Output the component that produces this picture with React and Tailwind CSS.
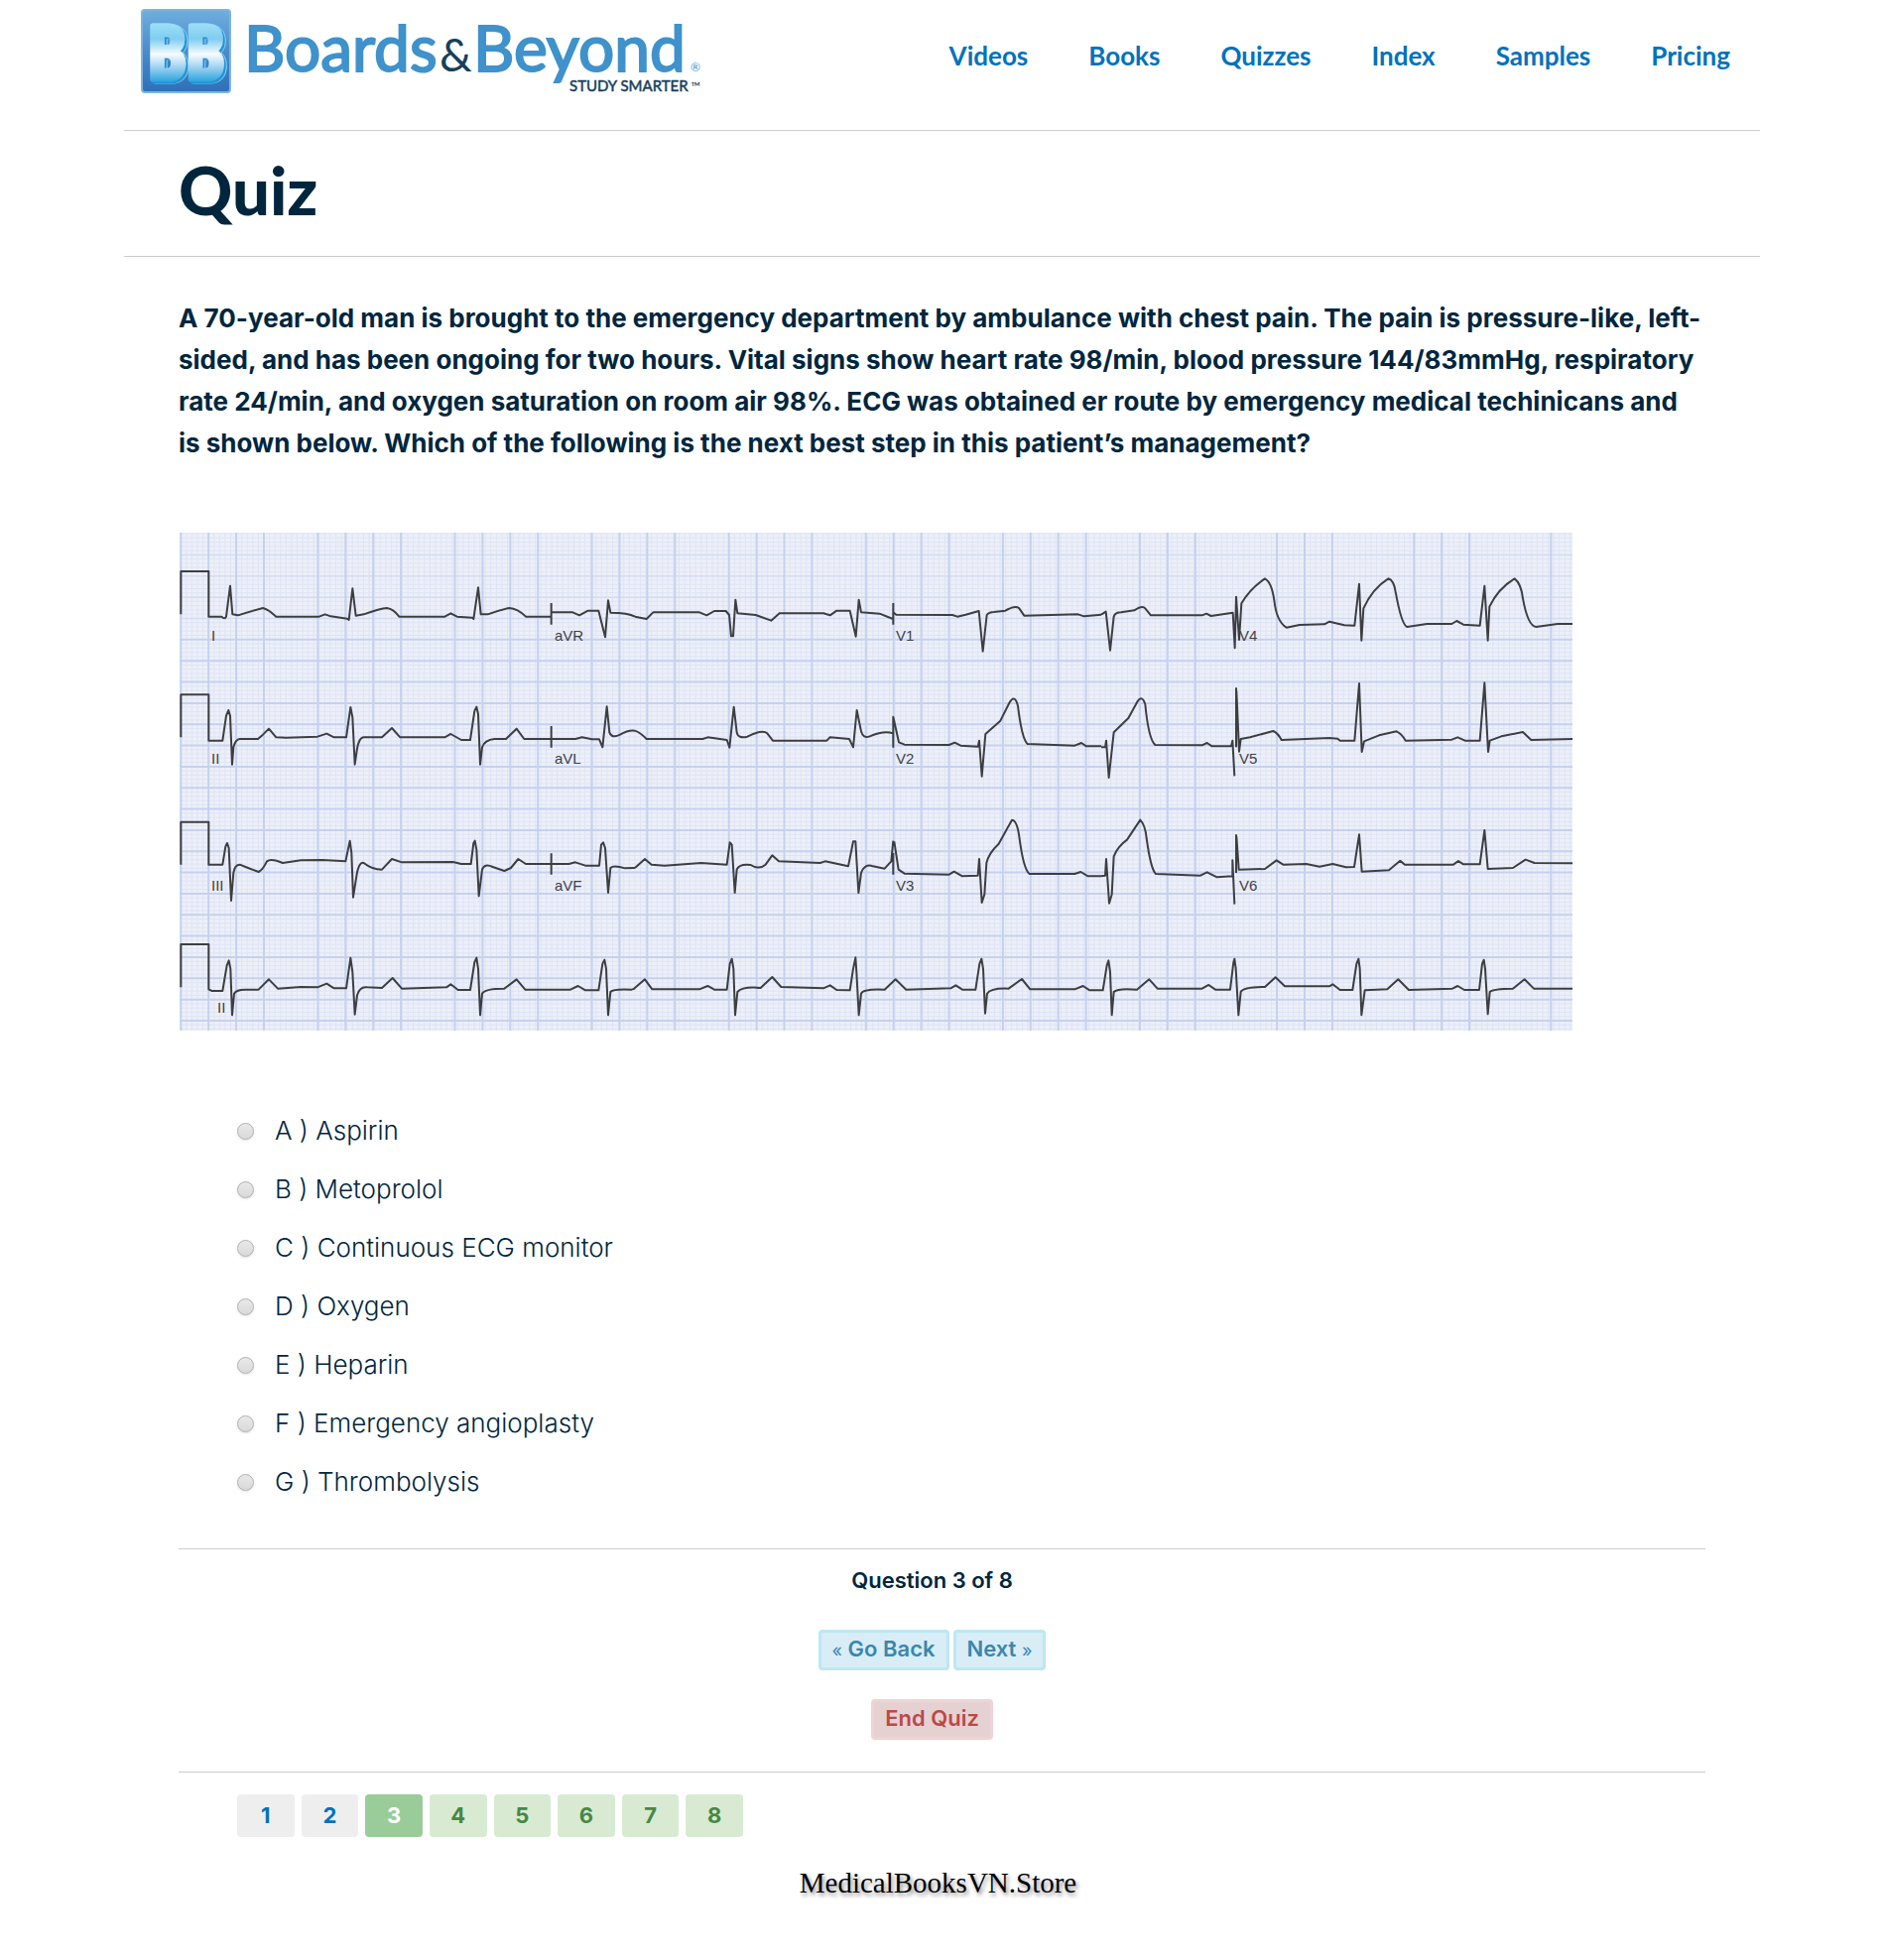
import React, { useState } from "react";

const NAV = ["Videos", "Books", "Quizzes", "Index", "Samples", "Pricing"];

const OPTIONS = [
  ["A", "Aspirin"],
  ["B", "Metoprolol"],
  ["C", "Continuous ECG monitor"],
  ["D", "Oxygen"],
  ["E", "Heparin"],
  ["F", "Emergency angioplasty"],
  ["G", "Thrombolysis"],
];

function Logo() {
  return (
    <svg viewBox="0 0 580 110" className="h-[110px] w-[580px] overflow-visible" role="img" aria-label="Boards & Beyond">
      <defs>
        <linearGradient id="tile" x1="0" y1="0" x2="0" y2="1">
          <stop offset="0" stopColor="#6faede" />
          <stop offset="0.5" stopColor="#4a8bcb" />
          <stop offset="1" stopColor="#2f6fb8" />
        </linearGradient>
        <linearGradient id="face" gradientUnits="userSpaceOnUse" x1="0" y1="12" x2="0" y2="76">
          <stop offset="0" stopColor="#a5e2f6" />
          <stop offset="0.3" stopColor="#7fcdf0" />
          <stop offset="0.54" stopColor="#f7fcff" />
          <stop offset="0.7" stopColor="#b5dcf4" />
          <stop offset="1" stopColor="#1f9fdd" />
        </linearGradient>
        <filter id="depth" x="-10%" y="-10%" width="120%" height="120%">
          <feDropShadow dx="1" dy="1" stdDeviation="0" floodColor="#2496d8" />
          <feDropShadow dx="1" dy="1" stdDeviation="0" floodColor="#2496d8" />
          <feDropShadow dx="1" dy="0" stdDeviation="0.5" floodColor="#7fd0f2" />
        </filter>
      </defs>
      <rect x="1" y="2" width="89" height="83" rx="3" fill="url(#tile)" stroke="#7fb3dd" strokeWidth="2" />
      <text
        x="7" y="72" fontFamily="'Open Sans Condensed', 'Roboto Condensed', sans-serif" fontWeight="700" fontSize="76"
        fill="url(#face)" stroke="url(#face)" strokeWidth="5" strokeLinejoin="round" filter="url(#depth)"
      >BB</text>
      <g fontFamily="Lato, sans-serif" fontSize="64">
        <text x="104" y="64" fill="#3f92cb" stroke="#3f92cb" strokeWidth="2">Boards</text>
        <text x="301" y="64" fontSize="46" fill="#163f5c">&amp;</text>
        <text x="335" y="64" fill="#3f92cb" stroke="#3f92cb" strokeWidth="2">Beyond</text>
      </g>
      <text x="554" y="64" fontSize="12" fontFamily="Lato, sans-serif" fill="#3f92cb">®</text>
      <text x="432" y="84" fontSize="15" fontFamily="Lato, sans-serif" fill="#163f5c" stroke="#163f5c" strokeWidth="0.5">STUDY SMARTER</text>
      <text x="554" y="84" fontSize="13" fontFamily="Lato, sans-serif" fill="#163f5c">™</text>
    </svg>
  );
}

const range = (n) => Array.from({ length: n }, (_, i) => i);

const MAJOR_X = range(11).flatMap((k) =>
  range(k >= 7 ? 3 : 4).map((j) => 182.3 + 138.1 * k + 27.9 * j)
).filter((x) => x < 1585);
const MAJOR_Y = range(23).map((k) => 559.5 + 21.34 * k);
const MINOR_X = range(252).map((k) => 182.3 + 5.58 * k);
const MINOR_Y = range(118).map((k) => 538 + 4.27 * k);

const vLines = (xs) => xs.map((x) => `M${x} 537V1039`).join("");
const hLines = (ys) => ys.map((y) => `M181 ${y}H1585`).join("");

const STRIPS = [
  {
    at: "translate(170 530) scale(0.33333)",
    d: [
      "M37 268V138H121V275H160Q170 285 174 275L186 182L193 268L210 271Q250 258 285 249Q300 252 325 275H455L473 268L490 274L540 281L545 285L556 190L566 272L590 268Q640 250 660 249Q680 252 697 275H835L853 265L872 275L918 278L922 282L936 187L944 268H965Q1000 255 1030 249Q1055 250 1080 275H1155M1157 234V299M1157 262H1222L1242 271L1268 257H1300L1320 337L1329 226L1336 263Q1390 263 1410 275",
      "M37 640V511H121V650H163L174 575L181 558L186 575L192 722L196 670Q202 646 215 645H270L285 632L303 614L325 640L355 641L450 638L478 629L500 640H537L550 549L556 580L563 722L569 680Q575 640 590 640H645L675 612L700 640H835L853 630L885 648H912L925 560L931 548L936 570L942 722L948 670Q955 648 985 645H1020L1052 614L1075 645H1155M1157 606V671M1157 645H1230L1250 640L1280 646H1302L1312 670L1325 547L1333 625Q1340 645 1365 632Q1390 617 1410 620",
    ],
  },
  {
    at: "translate(640 530) scale(0.33333)",
    d: [
      "M0 275L35 282L55 262H195L217 271L240 258H275L285 270L291 334H297L304 224L310 265L365 270L412 287L437 265H570L590 271L610 257H650L668 335L677 224L684 262L740 266L780 282M781 234V299M781 262L790 269L960 270L975 275L1000 269L1040 258L1052 380L1064 270Q1070 262 1085 261L1120 257Q1150 240 1162 250L1177 272L1340 268L1358 274L1410 269",
      "M0 620Q15 625 35 645H205L220 640L278 648L286 671L299 548L308 625Q312 645 340 638Q385 615 400 628L417 650H580L590 640L648 645L660 670L671 558L684 622Q690 645 710 637Q755 618 780 628M781 671V578L798 655L815 662L950 663L967 656L985 665L1037 668L1041 650L1049 758L1060 630L1105 590L1130 540Q1148 505 1158 545Q1170 645 1187 660L1330 665L1350 657L1365 667H1410",
    ],
  },
  {
    at: "translate(1110 530) scale(0.33333)",
    d: [
      "M0 269L14 260L27 377L38 275Q42 262 60 262L100 256Q125 240 133 250L150 271H305L318 266L332 273L398 263L404 370L408 215L417 345L424 235Q450 190 495 160Q515 170 523 225Q530 290 560 308L600 300L675 298L690 290L735 301L766 302L780 176L787 347L793 250Q820 190 868 160Q885 165 890 200Q908 300 925 306L985 297H1060L1075 288L1095 299L1145 302L1159 182L1169 347L1174 245Q1200 190 1250 160Q1270 175 1275 220Q1290 303 1315 306L1380 297H1425",
      "M0 670H12L15 650L23 762L38 625L82 582L105 540Q122 505 133 540Q143 645 163 663L305 664L320 657L335 667H393L397 650L403 757M408 490V670M409 500L417 683L422 645L450 640L520 621Q535 628 545 648L690 642L715 644L722 650H766L780 477L788 684L795 652L840 634L893 622Q910 630 920 650L1060 647L1078 640L1100 650H1145L1159 475L1170 684L1175 650L1210 637L1275 624L1300 648L1425 645",
    ],
  },
  {
    at: "translate(170 780) scale(0.33333)",
    d: [
      "M37 275V146H121V275H163L172 220L177 210L182 225L189 384L196 300Q200 275 215 275L240 285L272 297Q285 290 297 265Q310 255 345 270L400 262L465 261L535 265L548 203L553 240L558 374L568 310Q575 265 590 270Q615 290 645 290L675 258L705 268L860 267L885 273H914L922 210L926 203L931 230L938 370L948 290Q955 270 980 282L1015 294L1035 285L1057 258L1080 273H1155M1157 241V305M1157 273H1210L1230 268L1260 278H1302L1308 215L1314 208L1320 225L1329 360L1336 285Q1345 275 1380 286L1410 285",
      "M37 646V516H121V652L130 657H163L176 580L182 565L187 590L192 730L198 665Q205 653 230 653H272L303 622L330 650L400 645L450 646L478 635L500 649H537L550 557L556 600L563 728L570 670Q578 643 600 646L645 648L677 618L705 650L840 646L853 637L875 654H912L925 570L931 557L936 590L942 730L948 665Q955 650 1015 650L1052 622L1078 653H1215L1238 642L1260 655H1300L1312 575L1318 563L1323 590L1329 730L1336 660Q1345 650 1400 653L1410 650",
    ],
  },
  {
    at: "translate(640 780) scale(0.33333)",
    d: [
      "M0 285L30 258L50 275L90 278L200 270L278 275L287 208L293 215L302 360L308 290Q315 272 350 276Q375 292 395 275L415 247L435 265L560 270L575 265L645 280L660 205H667L676 360L684 300Q695 270 720 280L755 287L775 265L781 203M781 240V305M784 205L797 290L815 302L950 305L965 296L990 310L1037 308L1041 258L1049 390L1057 365L1063 270Q1070 240 1100 212L1140 140Q1155 140 1162 190Q1175 290 1193 303H1330L1348 297L1370 310H1410",
      "M-3 650L30 622L52 652H195L220 642L240 653H278L287 575L293 560L298 590L303 730L310 660Q325 643 380 648L415 615L442 645L570 649L590 640L610 654L650 655L660 590L667 556L670 600L677 730L684 665Q690 650 755 653L788 622L820 653L955 649L970 640L990 653H1030L1042 575L1048 560L1053 590L1059 725L1065 665Q1075 648 1130 650L1170 621L1195 652H1330L1355 642L1375 655H1410",
    ],
  },
  {
    at: "translate(1110 780) scale(0.33333)",
    d: [
      "M0 310L12 308L15 258L24 392L32 365L38 250Q50 220 78 200L118 140Q133 155 137 195Q150 290 165 303L300 308L320 298L350 313L397 310V262L403 395M408 184V300M409 190L416 290L495 288L530 262L550 275L620 273L660 281L700 273L740 283L765 282L780 184L788 296L870 292L904 263L918 275H1065L1080 264L1095 274H1145L1159 171L1169 288L1245 285L1283 260L1310 270L1425 271",
      "M0 655H5L17 580L22 565L27 600L32 730L38 660Q50 648 108 653L145 622L170 650H305L325 639L345 653H390L400 570L403 560L407 590L415 730L422 660Q430 645 495 645L527 616L555 643H690L700 637L722 654H760L772 575L778 560L782 590L787 730L797 655L865 652L898 622L930 654L1062 650L1078 642L1098 654H1143L1152 575L1157 563L1161 590L1169 727L1175 660Q1185 650 1245 650L1280 622L1308 650H1425",
    ],
  },
];

const LEADS = [
  [213, 646, "I"], [559, 646, "aVR"], [903, 646, "V1"], [1249, 646, "V4"],
  [213, 770, "II"], [559, 770, "aVL"], [903, 770, "V2"], [1249, 770, "V5"],
  [213, 898, "III"], [559, 898, "aVF"], [903, 898, "V3"], [1249, 898, "V6"],
  [219, 1021, "II"],
];

function Ecg() {
  return (
    <svg viewBox="181 537 1404 502" className="block h-auto w-full max-w-[1404px]" role="img" aria-label="12-lead ECG">
      <rect x="181" y="537" width="1404" height="502" fill="#edf0f8" />
      <g fill="none">
        <path d={vLines(MINOR_X)} stroke="#dfe4f5" />
        <path d={hLines(MINOR_Y)} stroke="#dfe4f5" />
        <path d={hLines(MAJOR_Y.slice(0, 4))} stroke="#d5dcf2" strokeWidth="1.5" />
        <path d={hLines(MAJOR_Y.slice(4))} stroke="#c6d1ef" strokeWidth="2" />
        <path d={vLines(MAJOR_X)} stroke="#c6d1ef" strokeWidth="2" />
      </g>
      <g fill="none" stroke="#3c3e42" strokeWidth="6" strokeLinejoin="round">
        {STRIPS.map((s) => (
          <g key={s.at} transform={s.at}>
            {s.d.map((d) => <path key={d} d={d} />)}
          </g>
        ))}
      </g>
      <g fill="#3f4248" fontFamily="'Liberation Sans', sans-serif" fontSize="15">
        {LEADS.map(([x, y, t]) => <text key={`${x}-${y}`} x={x} y={y}>{t}</text>)}
      </g>
    </svg>
  );
}

const pageStyle = (n) => {
  if (n < 3) return "bg-[#eeeeee] text-[#0072bc]";
  if (n === 3) return "bg-[#99cc99] text-white";
  return "bg-[#d9ead3] text-[#468847]";
};

export default function App() {
  const [answer, setAnswer] = useState(null);
  return (
    <div className="mx-auto max-w-[1649px] bg-white font-[Inter,sans-serif] text-[#00263e]">
      <header className="flex h-[132px] items-start justify-between border-b border-[#cccccc] pl-[17px] pr-[30px] pt-2">
        <a href="#home"><Logo /></a>
        <nav className="flex gap-[61px] pt-8 font-[Lato,sans-serif] text-[26px] font-bold leading-8 text-[#0072bc]">
          {NAV.map((n) => <a key={n} href={`#${n.toLowerCase()}`}>{n}</a>)}
        </nav>
      </header>

      <div className="flex h-[127px] items-center border-b border-[#cccccc] px-[55px] pb-2">
        <h1 className="font-[Lato,sans-serif] text-[67px] font-black leading-none">Quiz</h1>
      </div>

      <main className="px-[55px]">
        <p className="pt-[41px] text-[26px] font-bold leading-[42px]">
          A 70-year-old man is brought to the emergency department by ambulance with chest pain. The pain is pressure-like, left-<br />
          sided, and has been ongoing for two hours. Vital signs show heart rate 98/min, blood pressure 144/83mmHg, respiratory<br />
          rate 24/min, and oxygen saturation on room air 98%. ECG was obtained er route by emergency medical techinicans and<br />
          is shown below. Which of the following is the next best step in this patient’s management?
        </p>

        <div className="pl-px pt-[69px]"><Ecg /></div>

        <fieldset className="mt-[71px] pl-[59px]">
          {OPTIONS.map(([k, t]) => (
            <label key={k} className="flex h-[59px] items-center gap-[21px] text-[26px] font-light">
              <input
                type="radio"
                name="answer"
                value={k}
                checked={answer === k}
                onChange={() => setAnswer(k)}
                className="mt-0.5 size-[17px] appearance-none rounded-full border border-[#b0b0b0] bg-linear-to-b from-[#e9e9e9] to-[#d9d9d9] shadow-sm checked:border-4 checked:border-[#0072bc]"
              />
              <span>{k} ) {t}</span>
            </label>
          ))}
        </fieldset>

        <section className="mt-[38px] border-y border-[#cccccc] pb-8 pr-5 text-center text-[22px] font-semibold">
          <p className="pt-[15px] leading-8">Question 3 of 8</p>
          <div className="mt-[34px] flex justify-center gap-1 text-[#3a87ad]">
            <button type="button" className="h-[41px] rounded-[4px] border-[3px] border-[#bce8f1] bg-[#d9edf7] px-[11px] pb-1 leading-8"><span className="text-lg font-normal">«</span> Go Back</button>
            <button type="button" className="h-[41px] rounded-[4px] border-[3px] border-[#bce8f1] bg-[#d9edf7] px-[11px] pb-1 leading-8">Next <span className="text-lg font-normal">»</span></button>
          </div>
          <button type="button" className="mt-[29px] h-[41px] rounded-[4px] border-[3px] border-[#eed3d7] bg-[#e6d1d2] px-[11px] pb-1 leading-8 text-[#b94a48]">End Quiz</button>
        </section>

        <nav aria-label="Questions" className="ml-[59px] mt-[22px] grid w-[510px] grid-cols-8 gap-[7px] text-[22px] font-bold">
          {range(8).map((i) => (
            <a key={i} href={`#question-${i + 1}`} className={`flex h-[43px] items-center justify-center rounded-[4px] ${pageStyle(i + 1)}`}>{i + 1}</a>
          ))}
        </nav>
      </main>

      <footer className="mt-[30px] pr-2 text-center font-['Liberation_Serif',serif] text-[29px] leading-8 text-black [text-shadow:2px_3px_4px_rgba(0,0,0,0.45)]">
        MedicalBooksVN.Store
      </footer>
    </div>
  );
}
